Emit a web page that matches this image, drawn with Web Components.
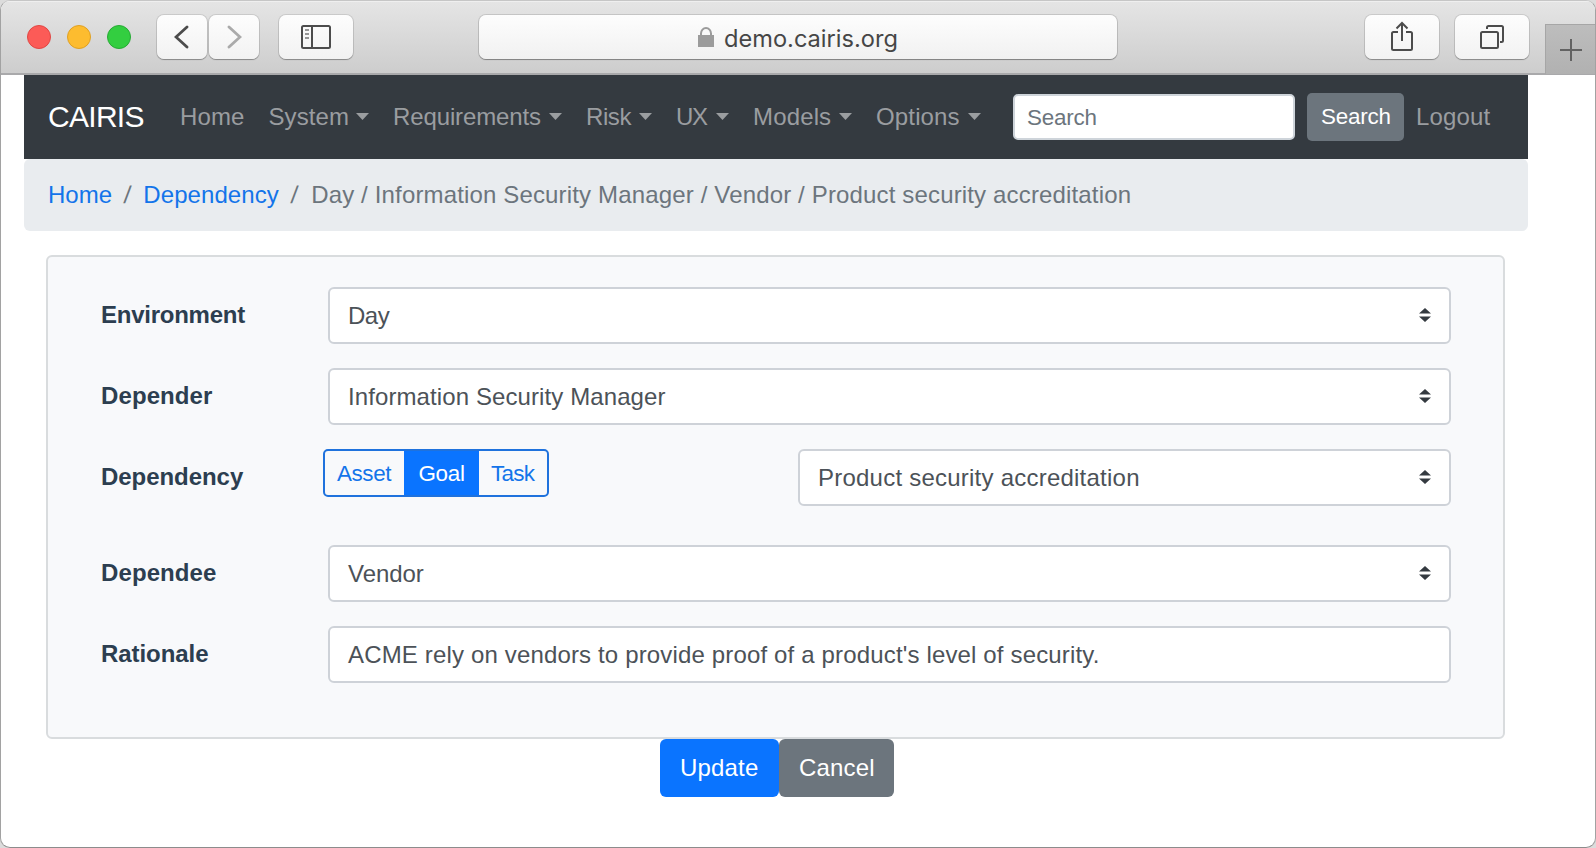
<!DOCTYPE html>
<html lang="en">
<head>
<meta charset="utf-8">
<title>CAIRIS</title>
<style>
html,body{margin:0;height:100%;background:#dcdcdc;overflow:hidden}
body{font-family:"Liberation Sans",Arial,sans-serif;font-size:24px}
</style>
</head>
<body>
<browser-window>
  <browser-toolbar slot="toolbar"></browser-toolbar>
  <site-navbar></site-navbar>
  <site-breadcrumb></site-breadcrumb>
  <form-card>
    <form-row label="Environment" ls="-.25px"><select-box ls="-.5px">Day</select-box></form-row>
    <form-row label="Depender" ls=".1px"><select-box ls=".1px">Information Security Manager</select-box></form-row>
    <form-row label="Dependency" ls="-.05px" style="margin-bottom:39px"><toggle-group></toggle-group><select-box class="half" ls=".23px">Product security accreditation</select-box></form-row>
    <form-row label="Dependee" ls=".1px"><select-box ls="-.05px">Vendor</select-box></form-row>
    <form-row label="Rationale" ls="-.06px"><select-box plain ls=".155px">ACME rely on vendors to provide proof of a product's level of security.</select-box></form-row>
  </form-card>
  <form-actions></form-actions>
</browser-window>
<script>
const define = (name, render) => customElements.define(name, class extends HTMLElement {
  connectedCallback() {
    if (this.shadowRoot) return;
    const t = document.createElement('template');
    t.innerHTML = '<style>*{box-sizing:border-box}:host{box-sizing:border-box;white-space:nowrap}</style>' + render(this);
    this.attachShadow({ mode: 'open' }).append(t.content.cloneNode(true));
  }
});

define('browser-window', () => `
<style>
:host{display:flex;flex-direction:column;height:848px;border:1px solid #a2a2a2;border-top-color:#c6c6c6;border-bottom-color:#8c8c8c;border-radius:10px;background:#fff;overflow:hidden}
main{display:flex;flex-direction:column;width:1504px;margin-left:23px}
</style>
<slot name="toolbar"></slot><main><slot></slot></main>`);

define('tool-button', el => `
<style>
:host{display:flex;align-items:center;justify-content:center;width:74px;height:44px;border-radius:7px;background:linear-gradient(#fdfdfd,#f2f2f2);box-shadow:0 0 0 1px rgba(0,0,0,.1),0 1px 1px rgba(0,0,0,.28)}
</style><slot></slot>`);

define('browser-toolbar', () => `
<style>
:host{display:flex;height:74px;flex:none;padding:14px 0 0 26px;background:linear-gradient(#e5e5e5,#cdcdcd);border-bottom:2px solid #a9a9ab;box-shadow:inset 0 1px #efefef}
.lights{display:flex;gap:16px;height:44px;align-items:center;margin-right:26px}
i{width:24px;height:24px;border-radius:50%;border:1px solid}
.r{background:#fc5b57;border-color:#e04744}.y{background:#fdbc2f;border-color:#dfa023}.g{background:#33ce40;border-color:#27aa35}
.nav{width:50px;margin-right:2px}
.side{margin-left:18px}
.url{display:flex;align-items:center;justify-content:center;width:638px;height:44px;margin-left:126px;margin-right:248px;border-radius:7px;background:linear-gradient(#fdfdfd,#f1f1f1);box-shadow:0 0 0 1px rgba(0,0,0,.12),0 1px 1px rgba(0,0,0,.3);font:400 23.6px/44px Inter,sans-serif;color:#464646}
.url span{padding-top:3px}
.url svg{margin:0 10px 0 0}
.tabs{margin-left:16px}
.plus{width:50px;height:50px;margin:9px 0 0 16px;border-top:1px solid #a6a6a6;border-left:1px solid #a6a6a6;background:linear-gradient(#bdbdbd,#b1b1b1);display:flex;align-items:center;justify-content:center;padding:1px 0 0 0}
svg{display:block;fill:none;stroke:#4c4c4c;stroke-width:2}
</style>
<div class="lights"><i class="r"></i><i class="y"></i><i class="g"></i></div>
<tool-button class="nav"><svg width="16" height="26" style="stroke-width:2.8;stroke-linecap:round"><path d="M13 3 2 13 13 23"/></svg></tool-button>
<tool-button class="nav"><svg width="16" height="26" style="stroke:#aaa;stroke-width:2.8;stroke-linecap:round"><path d="M3 3 14 13 3 23"/></svg></tool-button>
<tool-button class="side"><svg width="30" height="24"><rect x="1" y="1" width="28" height="22" rx="1.5"/><path d="M11 1v22"/><path d="M4 5h4M4 9h4M4 13h4" stroke="#777" stroke-width="1.6"/></svg></tool-button>
<div class="url"><svg width="16" height="20" style="stroke:#9b9b9b"><path d="M3 9V6.5a5 5.5 0 0 1 10 0V9"/><rect x="0" y="8" width="16" height="12" fill="#9b9b9b" stroke="none"/></svg><span>demo.cairis.org</span></div>
<tool-button><svg width="22" height="30" style="margin-top:-2px"><path d="M7 11H2.500Q1 11 1 12.500V27.500Q1 29 2.500 29H19.500Q21 29 21 27.500V12.500Q21 11 19.500 11H15M11 20V2M5.500 7.500 11 2 16.500 7.500"/></svg></tool-button>
<tool-button class="tabs"><svg width="24" height="24"><rect x="1" y="7" width="17" height="16" rx="1.500"/><path d="M7 4V2.500Q7 1 8.500 1H21.500Q23 1 23 2.500V15.500Q23 17 21.500 17H20"/></svg></tool-button>
<div class="plus"><svg width="22" height="22" style="stroke:#626262"><path d="M11 0V22M0 11H22"/></svg></div>`);

define('nav-item', el => `
<style>
:host{display:flex;align-items:center;justify-content:space-between;color:#9a9da0;width:${el.getAttribute('w')}px;letter-spacing:${el.getAttribute('ls')}px}
svg{display:block;flex:none;fill:currentColor;margin-top:-1px}
</style><span><slot></slot></span>${el.hasAttribute('menu') ? '<svg width="13" height="7"><path d="M0 0h13L6.500 7z"/></svg>' : ''}`);

define('site-navbar', () => `
<style>
:host{display:flex;align-items:center;height:84px;background:#343a40;padding-left:24px}
.brand{font-size:30px;color:#fff;letter-spacing:-.7px;width:132px}
nav{display:flex;gap:24px;width:833px}
.in{width:282px;height:46px;border:2px solid #ced4da;border-radius:5px;background:#fff;color:#6c757d;font-size:22.400px;line-height:43px;padding-left:12px;letter-spacing:-.2px}
.btn{width:97px;height:48px;margin:0 12px;border-radius:5px;background:#6c757d;color:#fff;font-size:22.400px;line-height:48px;padding-left:14px;letter-spacing:-.2px}
</style>
<span class="brand">CAIRIS</span>
<nav><nav-item w="64.500" ls="0.1">Home</nav-item><nav-item menu w="100.5" ls="0.1">System</nav-item><nav-item menu w="169" ls="-0.12">Requirements</nav-item><nav-item menu w="66" ls="-0.4">Risk</nav-item><nav-item menu w="53" ls="-1.4">UX</nav-item><nav-item menu w="99" ls="0.15">Models</nav-item><nav-item menu w="105" ls="0.15">Options</nav-item></nav>
<span class="in">Search</span><span class="btn">Search</span><nav-item w="76" ls="0.15">Logout</nav-item>`);

define('site-breadcrumb', () => `
<style>
:host{display:flex;align-items:center;height:72px;border-radius:6px;background:#e9ecef;padding-left:24px;color:#6c757d}
a{color:#1374ea}i{font-style:normal;margin:0 12.300px;transform:skewX(-6deg)}
.d{letter-spacing:.08px}.l{letter-spacing:.153px;margin-left:1px}
</style>
<a>Home</a><i>/</i><a class="d">Dependency</a><i>/</i><span class="l">Day / Information Security Manager / Vendor / Product security accreditation</span>`);

define('form-card', () => `
<style>
:host{display:flex;flex-direction:column;width:1459px;height:484px;margin:24px 0 0 22px;border:2px solid #d9dcde;border-radius:6px;background:#f8f9fb;padding:30px 52px 0}
</style><slot></slot>`);

define('form-row', el => `
<style>
:host{display:flex;height:57px;margin-bottom:24px}
label{width:228px;flex:none;padding-left:1px;font-weight:bold;color:#2c3e50;line-height:55px;letter-spacing:${el.getAttribute('ls')}}
</style><label>${el.getAttribute('label')}</label><slot></slot>`);

define('select-box', el => `
<style>
:host{display:flex;flex:1;align-items:center;justify-content:space-between;height:57px;border:2px solid #ced2d8;border-radius:6px;background:#fff;color:#4c5258;padding:0 18px;letter-spacing:${el.getAttribute('ls')}}
:host(.half){flex:0 0 653px;margin-left:auto}
svg{display:block;fill:#343a40;margin-top:-1px}
</style><span><slot></slot></span>${el.hasAttribute('plain') ? '' : '<svg width="12" height="14"><path d="M0 5.500 6 0 12 5.500zM0 8.500 6 14 12 8.500z"/></svg>'}`);

define('toggle-group', () => `
<style>
:host{display:flex;width:226px;height:48px;margin-left:-5px;border:2px solid #1f72dd;border-radius:5px;overflow:hidden;font-size:22.400px;line-height:46px;color:#1374ea}
span{padding-left:12px;height:44px}
.a{width:79px;letter-spacing:-.4px}.g{width:75px;background:#0a74ff;color:#fff;padding-left:14.500px;letter-spacing:-.3px}.t{padding-left:12px;letter-spacing:-.7px}
</style><span class="a">Asset</span><span class="g">Goal</span><span class="t">Task</span>`);

define('form-actions', () => `
<style>
:host{display:flex;margin-left:636px}
span{width:119px;height:58px;border-radius:6px;background:#0a74ff;color:#fff;line-height:58px;padding-left:20px;letter-spacing:.18px}
.c{width:115px;background:#6c757d}
</style><span>Update</span><span class="c">Cancel</span>`);
</script>
</body>
</html>
